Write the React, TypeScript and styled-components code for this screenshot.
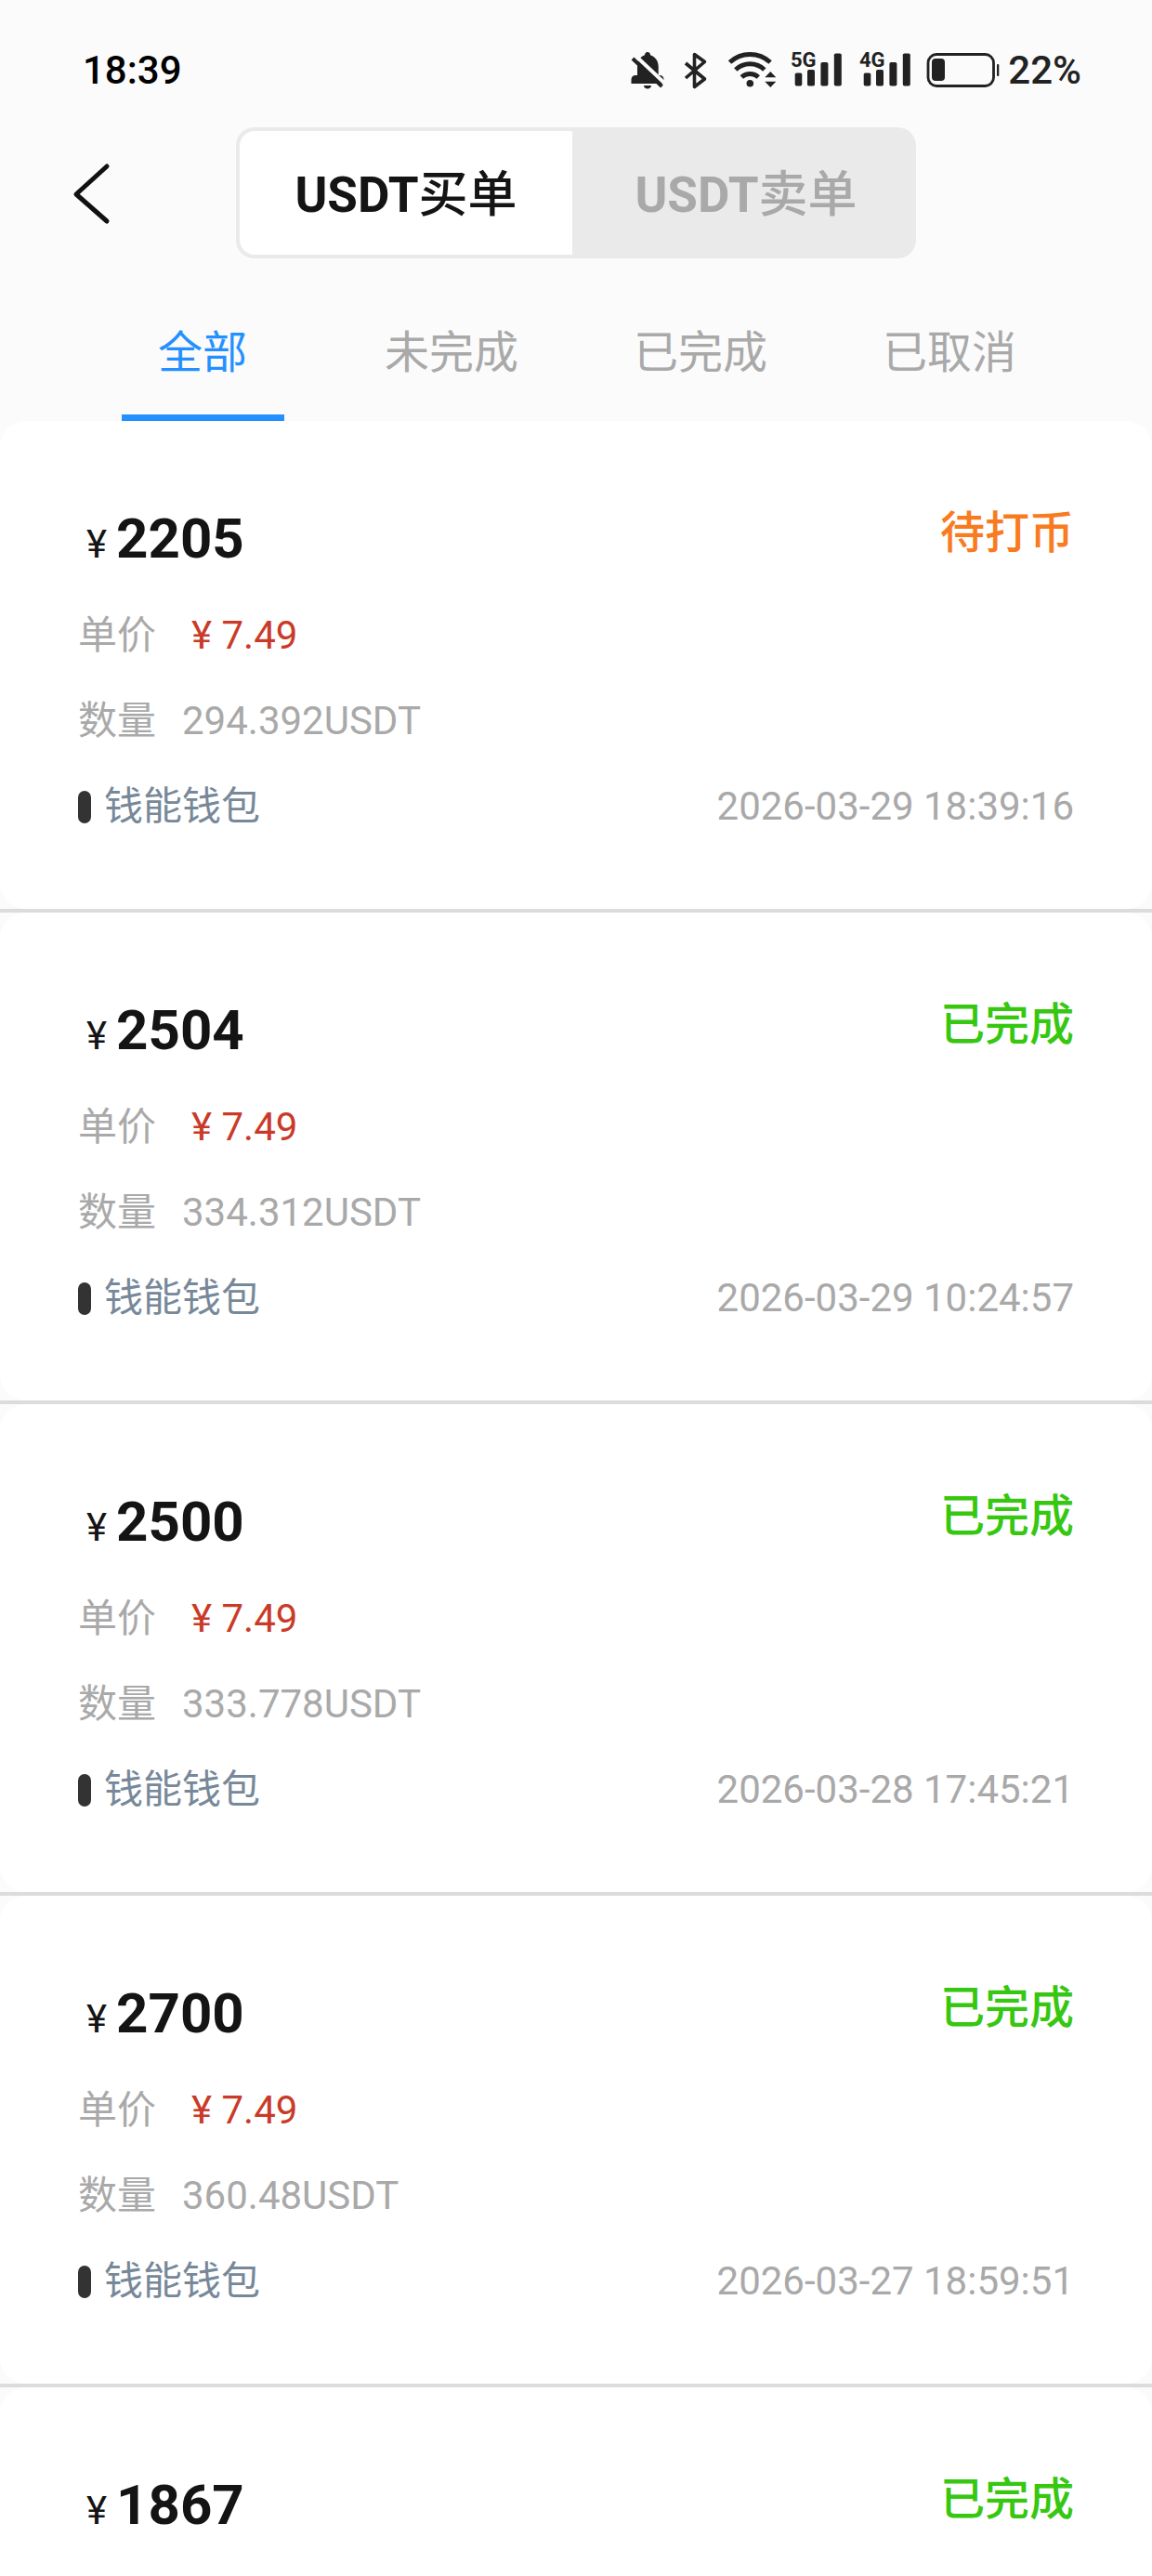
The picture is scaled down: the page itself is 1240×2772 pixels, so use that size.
import React, { useState } from 'react';
import styled, { createGlobalStyle } from 'styled-components';

const GlobalStyle = createGlobalStyle`
  *, *::before, *::after { box-sizing: border-box; }
  body {
    margin: 0;
    background: #fbfbfb;
    font-family: Roboto, "Noto Sans CJK SC", sans-serif;
  }
  button { font-family: inherit; border: 0; padding: 0; background: none; cursor: pointer; }
  h2, p { margin: 0; }
`;

const Page = styled.div`
  display: flex;
  flex-direction: column;
  height: 100vh;
  color: #141414;
`;

const StatusBar = styled.div`
  display: flex;
  justify-content: space-between;
  padding: 51px 76px 36px 89px;
  font-size: 42px;
  line-height: 50px;
  font-weight: 500;
`;

const Clock = styled.time`
  color: #000;
`;

const Indicators = styled.div`
  display: flex;
  align-items: center;
  gap: 10px;
  color: #222;

  svg { display: block; overflow: visible; }
`;

const Header = styled.header`
  display: grid;
  grid-template-columns: 1fr minmax(0, 732px) 1fr;
  align-items: center;
`;

const BackButton = styled.button`
  justify-self: start;
  margin-left: 76px;
  height: 68px;

  svg { display: block; }
`;

const Segmented = styled.div`
  display: flex;
  border-radius: 20px;
  background: #eaeaea;
  overflow: hidden;
`;

const Segment = styled.button<{ $active: boolean }>`
  flex: 0 0 50%;
  height: 141px;
  padding-top: 4px;
  border: ${p => (p.$active ? '4px solid #eaeaea' : '0')};
  border-radius: 20px 0 0 20px;
  font-size: 53px;
  line-height: 60px;
  font-weight: 700;
  color: ${p => (p.$active ? '#141414' : '#a9a9a9')};
  background: ${p => (p.$active ? '#fff' : 'transparent')};

  & + & { border-radius: 0 20px 20px 0; }
`;

const Cjk = styled.span`
  font-weight: 500;
`;

const Tabs = styled.nav`
  display: flex;
  padding: 0 84px;
`;

const Tab = styled.button<{ $active: boolean }>`
  flex: 1;
  display: flex;
  flex-direction: column;
  align-items: center;
  padding-top: 67px;
  font-size: 48px;
  line-height: 70px;
  color: ${p => (p.$active ? '#2490ff' : '#a9a9a9')};

  &::after {
    content: '';
    width: 175px;
    height: 7px;
    margin-top: 31px;
    background: ${p => (p.$active ? '#2490ff' : 'transparent')};
  }
`;

const List = styled.main`
  flex: 1;
  min-height: 0;
  overflow-y: auto;
  scrollbar-width: none;
`;

const Card = styled.article`
  padding: 65px 84px 64px;
  border-radius: 28px;
  background: #fff;
`;

const Divider = styled.hr`
  height: 4px;
  margin: 0;
  border: 0;
  background: #dcdcdc;
`;

const CardHead = styled.div`
  display: flex;
  justify-content: space-between;
  height: 120px;
`;

const Amount = styled.h2`
  display: flex;
  align-items: baseline;
  gap: 10px;
  padding-left: 9px;
  font-size: 60px;
  line-height: 124px;
  font-weight: 700;
`;

const Currency = styled.span`
  font-size: 42px;
  font-weight: 400;
`;

const State = styled.span<{ $done: boolean }>`
  font-size: 48px;
  line-height: 112px;
  font-weight: 500;
  color: ${p => (p.$done ? '#36c710' : '#f97b1f')};
`;

const Row = styled.div`
  display: flex;
  align-items: center;
  height: 92px;
  font-size: 42px;
  line-height: 60px;
  color: #a9a9a9;
`;

const Label = styled.span`
  width: 84px;
`;

const Price = styled.span`
  margin-left: 38px;
  color: #c93b28;
`;

const Quantity = styled.span`
  margin-left: 28px;
`;

const Marker = styled.span`
  width: 14px;
  height: 35px;
  margin-right: 14px;
  border-radius: 7px;
  background: #333;
`;

const Wallet = styled.span`
  color: #778899;
`;

const Stamp = styled.time`
  margin-left: auto;
`;

const BellOff = () => (
  <svg width="44" height="42" viewBox="677 54 44 42" aria-hidden="true">
    <path fill="currentColor" d="M697 55c2 0 3 1.500 3 3.300 5 1.600 8.700 6.200 8.700 12V80h1.500c2.500 0 4.300 2 4.300 4.500V89H679.500v-4.500c0-2.500 2-4.500 4.500-4.500h2V70c0-5.600 3.300-10.200 8-11.700 0-1.800 1-3.300 3-3.300zM693 91h8c0 2-1.700 3.500-4 3.500s-4-1.500-4-3.500z" />
    <path stroke="#fbfbfb" strokeWidth="4" d="M683 58l34 32" />
    <path stroke="currentColor" strokeWidth="4" d="M681 62l31.500 30" />
  </svg>
);

const Bluetooth = () => (
  <svg width="38" height="42" viewBox="731 54 38 42" aria-hidden="true">
    <path fill="none" stroke="currentColor" strokeWidth="3.600" strokeLinejoin="round" d="M738 67l20.500 17-11 8.500v-35l11 8L738 83" />
  </svg>
);

const Wifi = () => (
  <svg width="58" height="42" viewBox="779 54 58 42" aria-hidden="true">
    <g fill="none" stroke="currentColor" strokeWidth="5">
      <path d="M785.500 66a32 32 0 0 1 43.600 0" />
      <path d="M791.800 74a22.500 22.500 0 0 1 31 0" />
      <path d="M798.300 82a13.500 13.500 0 0 1 18 0" />
    </g>
    <circle cx="807.300" cy="88.700" r="3.800" fill="currentColor" />
    <path fill="currentColor" d="M829.300 76l6 6.300h-12zM829.300 93l6-6.300h-12z" />
  </svg>
);

const SignalText = styled.text`
  font: 700 22px Roboto, sans-serif;
`;

const Signal = ({ label }: { label: string }) => (
  <svg width="64" height="42" viewBox="847 54 64 42" fill="currentColor" role="img" aria-label={`${label} signal`}>
    <SignalText x="851" y="71">{label}</SignalText>
    <rect x="855.700" y="77.500" width="7.600" height="14" rx="1.800" />
    <rect x="869" y="74" width="8" height="17.500" rx="1.800" />
    <rect x="883.400" y="66" width="8" height="25.500" rx="1.800" />
    <rect x="897.800" y="56.500" width="8" height="35" rx="1.800" />
  </svg>
);

const Battery = () => (
  <svg width="80" height="42" viewBox="995 54 80 42" aria-hidden="true">
    <rect x="999" y="57.500" width="70.500" height="34" rx="9" fill="none" stroke="currentColor" strokeWidth="2.800" />
    <rect x="1003" y="62" width="14" height="24" rx="4" fill="currentColor" />
    <rect x="1073" y="68" width="2.300" height="13" rx="1" fill="currentColor" />
  </svg>
);

interface Order {
  amount: string;
  done: boolean;
  state: string;
  detail?: { price: string; quantity: string; wallet: string; time: string };
}

const orders: Order[] = [
  { amount: '2205', done: false, state: '待打币', detail: { price: '7.49', quantity: '294.392USDT', wallet: '钱能钱包', time: '2026-03-29 18:39:16' } },
  { amount: '2504', done: true, state: '已完成', detail: { price: '7.49', quantity: '334.312USDT', wallet: '钱能钱包', time: '2026-03-29 10:24:57' } },
  { amount: '2500', done: true, state: '已完成', detail: { price: '7.49', quantity: '333.778USDT', wallet: '钱能钱包', time: '2026-03-28 17:45:21' } },
  { amount: '2700', done: true, state: '已完成', detail: { price: '7.49', quantity: '360.48USDT', wallet: '钱能钱包', time: '2026-03-27 18:59:51' } },
  { amount: '1867', done: true, state: '已完成' },
];

const OrderCard = ({ order }: { order: Order }) => (
  <Card>
    <CardHead>
      <Amount><Currency>¥</Currency>{order.amount}</Amount>
      <State $done={order.done}>{order.state}</State>
    </CardHead>
    {order.detail && (
      <>
        <Row><Label>单价</Label><Price>¥ {order.detail.price}</Price></Row>
        <Row><Label>数量</Label><Quantity>{order.detail.quantity}</Quantity></Row>
        <Row>
          <Marker />
          <Wallet>{order.detail.wallet}</Wallet>
          <Stamp>{order.detail.time}</Stamp>
        </Row>
      </>
    )}
  </Card>
);

const sides = ['买单', '卖单'];
const filters = ['全部', '未完成', '已完成', '已取消'];

export default function App() {
  const [side, setSide] = useState(0);
  const [filter, setFilter] = useState(0);

  return (
    <Page>
      <GlobalStyle />
      <StatusBar>
        <Clock>18:39</Clock>
        <Indicators>
          <BellOff />
          <Bluetooth />
          <Wifi />
          <Signal label="5G" />
          <Signal label="4G" />
          <Battery />
          <span>22%</span>
        </Indicators>
      </StatusBar>
      <Header>
        <BackButton aria-label="返回">
          <svg width="46" height="68" viewBox="0 0 46 68" fill="none" stroke="#111" strokeWidth="5" strokeLinecap="round" strokeLinejoin="round">
            <path d="M39 5L6 35l33 29" />
          </svg>
        </BackButton>
        <Segmented>
          {sides.map((name, i) => (
            <Segment key={name} $active={i === side} aria-pressed={i === side} onClick={() => setSide(i)}>
              USDT<Cjk>{name}</Cjk>
            </Segment>
          ))}
        </Segmented>
      </Header>
      <Tabs>
        {filters.map((name, i) => (
          <Tab key={name} $active={i === filter} aria-pressed={i === filter} onClick={() => setFilter(i)}>
            {name}
          </Tab>
        ))}
      </Tabs>
      <List>
        {orders.map((order, i) => (
          <React.Fragment key={order.amount}>
            {i > 0 && <Divider />}
            <OrderCard order={order} />
          </React.Fragment>
        ))}
      </List>
    </Page>
  );
}
